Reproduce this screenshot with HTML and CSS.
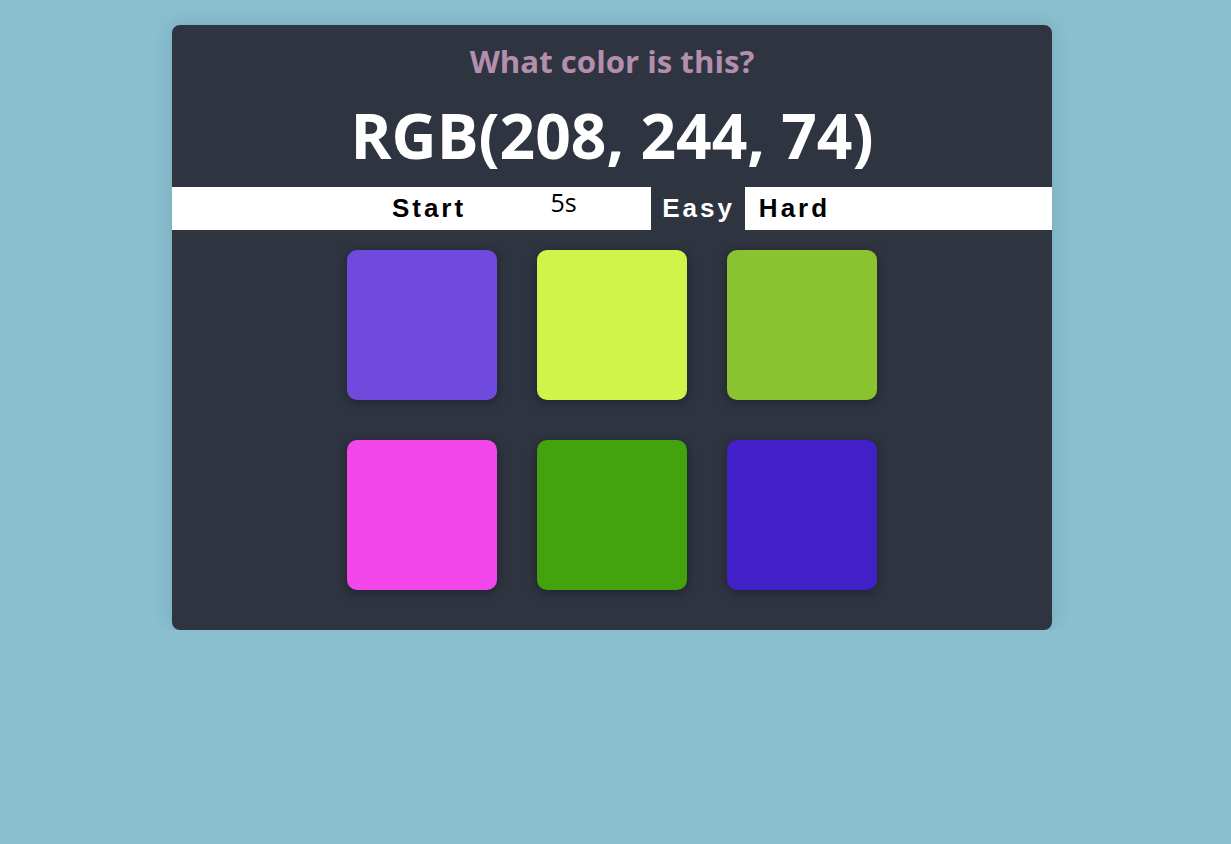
FILE: index.html
```html
<!DOCTYPE html>
<html lang="en">
<head>
<meta charset="utf-8">
<title>Color Game</title>
<link rel="stylesheet" href="styles.css">
</head>
<body>
<main class="card">
  <header class="header">
    <h2 class="question">What color is this?</h2>
    <h1 class="rgb">RGB(208, 244, 74)</h1>
  </header>
  <nav class="controls">
    <button class="btn">Start</button>
    <span class="timer">5s</span>
    <button class="btn selected">Easy</button>
    <button class="btn hard">Hard</button>
  </nav>
  <section class="grid">
    <div class="square sq1"></div>
    <div class="square sq2"></div>
    <div class="square sq3"></div>
    <div class="square sq4"></div>
    <div class="square sq5"></div>
    <div class="square sq6"></div>
  </section>
</main>
</body>
</html>
```

FILE: styles.css
```css
* { box-sizing: border-box; }
body {
  margin: 0;
  background: #89bfcf;
  font-family: "Open Sans", "DejaVu Sans", sans-serif;
  padding: 25px 7px 0 0;
}
.card {
  width: 880px;
  margin: 0 auto;
  background: #2e3440;
  border-radius: 8px;
  box-shadow: 0 0 20px rgba(0, 0, 0, 0.12);
  overflow: hidden;
}
.header {
  text-align: center;
  padding-top: 14px;
}
.question {
  margin: 0;
  color: #b48ead;
  font-size: 31.2px;
  font-weight: 700;
  line-height: 44px;
}
.rgb {
  margin: 0;
  color: #ffffff;
  font-size: 62.3px;
  font-weight: 700;
  line-height: 104px;
}
.controls {
  display: flex;
  justify-content: center;
  align-items: stretch;
  height: 43px;
  background: #ffffff;
}
.btn {
  border: none;
  background: transparent;
  font-family: "Liberation Sans", Arial, sans-serif;
  font-weight: 700;
  font-size: 26px;
  letter-spacing: 3px;
  color: #000;
  padding: 0 10px 0 11px;
  cursor: pointer;
}
.btn.selected {
  background: #2e3440;
  color: #ffffff;
}
.btn.hard {
  padding: 0 13px 0 14px;
}
.timer {
  width: 175px;
  text-align: center;
  font-size: 25px;
  line-height: 30px;
  color: #000;
}
.grid {
  display: grid;
  grid-template-columns: repeat(3, 150px);
  gap: 40px;
  justify-content: center;
  padding: 20px 0 40px;
}
.square {
  width: 150px;
  height: 150px;
  border-radius: 10px;
  box-shadow: 0 2px 10px rgba(0, 0, 0, 0.35);
}
.sq1 { background: #6f4adc; }
.sq2 { background: #d0f44a; }
.sq3 { background: #8bc22f; }
.sq4 { background: #f347ec; }
.sq5 { background: #43a30e; }
.sq6 { background: #4220c8; }
```
